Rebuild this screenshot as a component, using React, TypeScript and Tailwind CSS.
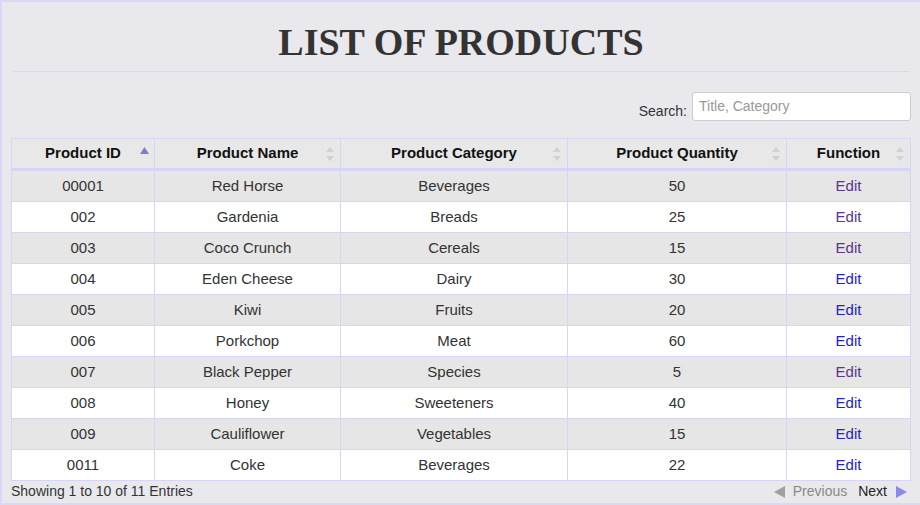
import React from "react";

const rows = [
  ["00001", "Red Horse", "Beverages", "50", true],
  ["002", "Gardenia", "Breads", "25", true],
  ["003", "Coco Crunch", "Cereals", "15", true],
  ["004", "Eden Cheese", "Dairy", "30", false],
  ["005", "Kiwi", "Fruits", "20", false],
  ["006", "Porkchop", "Meat", "60", false],
  ["007", "Black Pepper", "Species", "5", true],
  ["008", "Honey", "Sweeteners", "40", false],
  ["009", "Cauliflower", "Vegetables", "15", false],
  ["0011", "Coke", "Beverages", "22", false],
] as const;

function SortBoth() {
  return (
    <svg width="8" height="14" viewBox="0 0 8 14" className="absolute right-[6px] top-[8px]">
      <polygon points="4,0 8,5 0,5" fill="#d0d0d8" />
      <polygon points="0,9 8,9 4,14" fill="#d0d0d8" />
    </svg>
  );
}

function SortAsc() {
  return (
    <svg width="9" height="7" viewBox="0 0 9 7" className="absolute right-[5px] top-[8px]">
      <polygon points="4.5,0 9,7 0,7" fill="#7d7dd6" />
    </svg>
  );
}

export default function App() {
  const font = { fontFamily: '"Liberation Sans", Arial, sans-serif' };
  return (
    <div
      className="w-[920px] h-[505px] overflow-hidden bg-[#e9e9ed] border-t-2 border-l-2 border-b-2 border-[#d9d9f7] pl-[9px] pr-[9px] text-[#333]"
      style={font}
    >
      <div className="mx-[1px] border-b border-[#d8d8f4] pt-[21px] pb-[10px] text-center">
        <h1
          className="text-[38px] leading-[38px] font-bold text-[#333]"
          style={{ fontFamily: '"Liberation Serif", "Times New Roman", serif' }}
        >
          LIST OF PRODUCTS
        </h1>
      </div>
      <div className="flex justify-end items-end mt-[20px]">
        <span className="text-[14px] mr-[5px] mb-[0px] leading-[20px]">Search:</span>
        <div className="w-[219px] h-[29px] bg-white border border-[#cccccc] rounded-[3px] flex items-center px-[6px] text-[14px] text-[#999]">
          Title, Category
        </div>
      </div>
      <div className="mt-[17px] w-[900px] border-l border-r border-t border-[#d5d5f5]">
        <div className="grid grid-cols-[143px_186px_227px_219px_1fr] h-[32px] border-b-[3px] border-[#d5d5f5] bg-[#e8e8e8] text-[15px] font-bold text-[#111]">
          {["Product ID", "Product Name", "Product Category", "Product Quantity", "Function"].map((h, i) => (
            <div
              key={h}
              className={`relative flex items-center justify-center ${i < 4 ? "border-r border-[#d5d5f5]" : ""}`}
            >
              {h}
              {i === 0 ? <SortAsc /> : <SortBoth />}
            </div>
          ))}
        </div>
        {rows.map((r, idx) => (
          <div
            key={r[0]}
            className={`grid grid-cols-[143px_186px_227px_219px_1fr] h-[31px] border-b border-[#d5d5f5] text-[15px] ${
              idx % 2 === 0 ? "bg-[#e6e6e6]" : "bg-white"
            }`}
          >
            <div className="flex items-center justify-center border-r border-[#d5d5f5]">{r[0]}</div>
            <div className="flex items-center justify-center border-r border-[#d5d5f5]">{r[1]}</div>
            <div className="flex items-center justify-center border-r border-[#d5d5f5]">{r[2]}</div>
            <div className="flex items-center justify-center border-r border-[#d5d5f5]">{r[3]}</div>
            <div className={`flex items-center justify-center ${r[4] ? "text-[#5a3590]" : "text-[#2424c4]"}`}>
              Edit
            </div>
          </div>
        ))}
      </div>
      <div className="flex justify-between items-center h-[21px] text-[14px]">
        <span className="text-[#333]">Showing 1 to 10 of 11 Entries</span>
        <div className="flex items-center mr-[4px]">
          <svg width="11" height="12" viewBox="0 0 11 12" className="mr-[8px]">
            <polygon points="11,0 11,12 0,6" fill="#a0a0a0" />
          </svg>
          <span className="text-[#888] mr-[11px]">Previous</span>
          <span className="text-[#222] mr-[9px]">Next</span>
          <svg width="11" height="12" viewBox="0 0 11 12">
            <polygon points="0,0 11,6 0,12" fill="#8a8aee" />
          </svg>
        </div>
      </div>
    </div>
  );
}
